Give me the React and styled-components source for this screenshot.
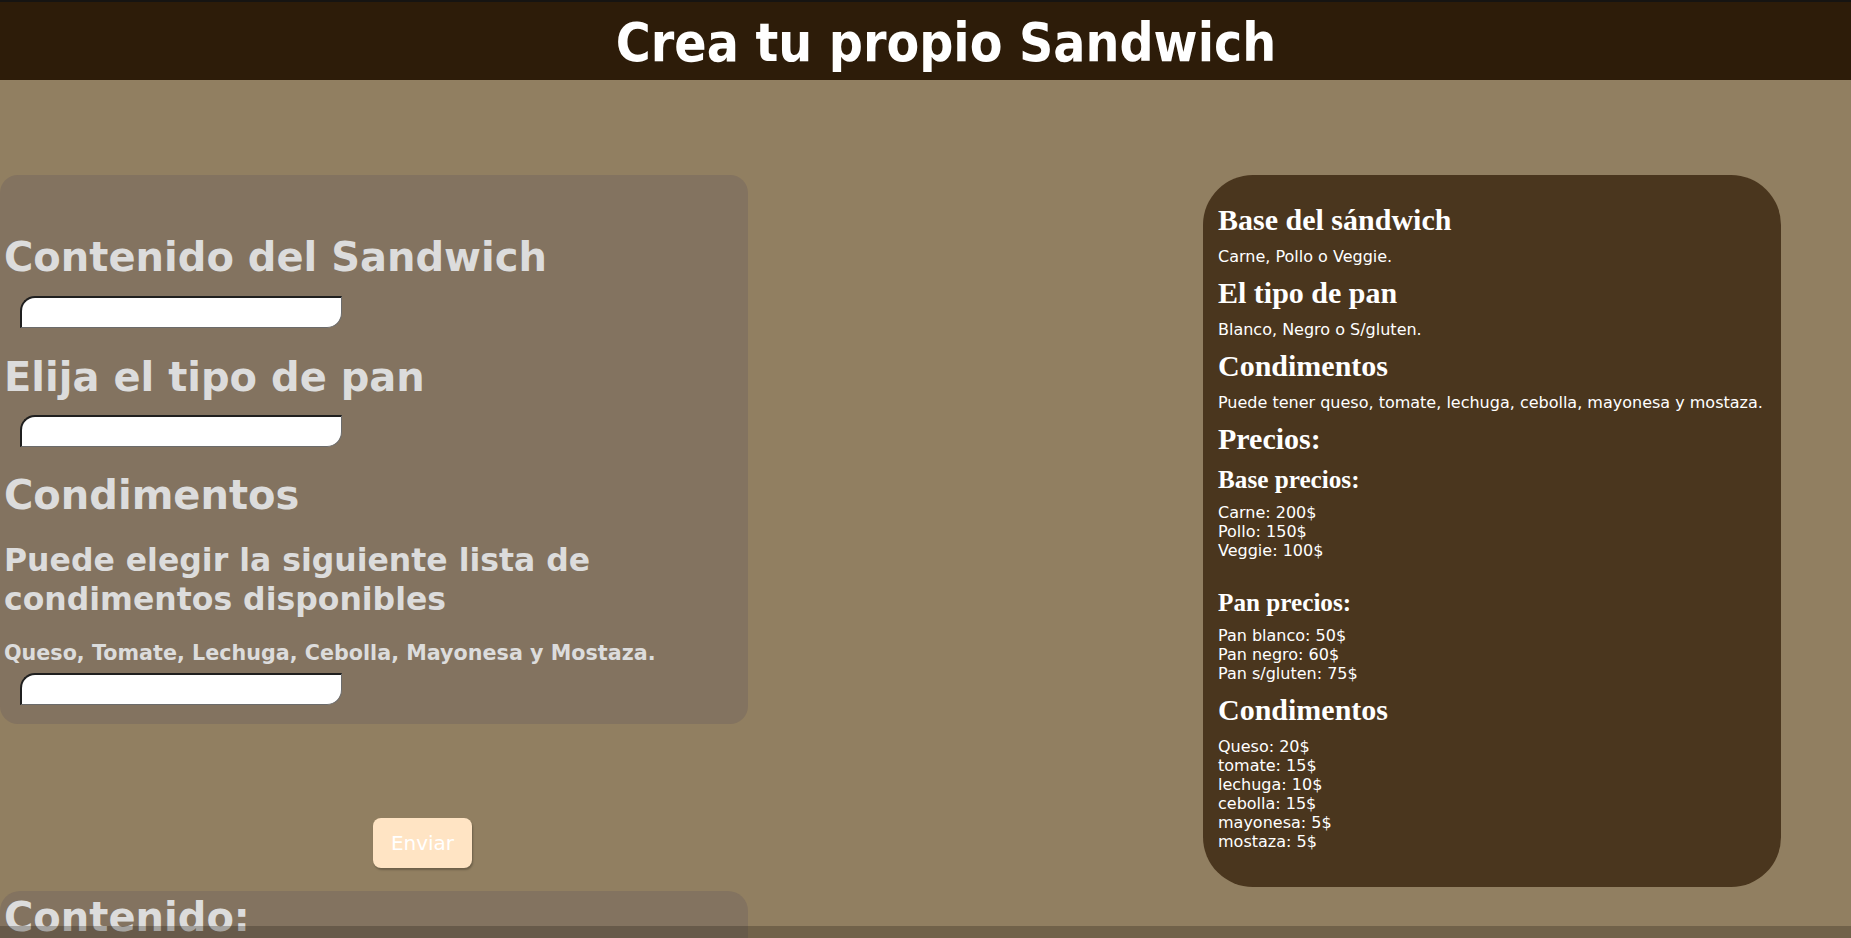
import React from 'react';
import styled, { createGlobalStyle } from 'styled-components';

const GlobalStyle = createGlobalStyle`
  body {
    margin: 0;
    background-color: #917f61;
    font-family: 'DejaVu Sans', Verdana, sans-serif;
  }
`;

const Header = styled.header`
  background-color: #2d1c09;
  border-top: 2px solid #161412;
  padding: 10px 0 6px 41px;
  text-align: center;
`;

const Title = styled.h1`
  margin: 0;
  font-family: 'DejaVu Sans Condensed', 'DejaVu Sans', sans-serif;
  font-stretch: condensed;
  font-size: 53px;
  line-height: 62px;
  font-weight: bold;
  color: #fff;
`;

const Main = styled.main`
  display: flex;
  justify-content: space-between;
  align-items: flex-start;
  padding: 95px 70px 0 0;
`;

const LeftColumn = styled.div`
  width: 748px;
  display: flex;
  flex-direction: column;
  align-items: flex-start;
`;

const FormCard = styled.section`
  align-self: stretch;
  background-color: #837360;
  border-radius: 18px;
  padding: 0 4px 19px;
  color: #dcdcdc;
  font-weight: bold;
`;

const SectionTitle = styled.h2`
  margin: ${(p) => p.$top || 0}px 0 0;
  font-size: 40px;
  line-height: 46px;
  font-weight: bold;
`;

const SubTitle = styled.h3`
  margin: ${(p) => p.$top || 0}px 0 0;
  font-size: 31.5px;
  line-height: 39px;
  font-weight: bold;
`;

const ListTitle = styled.h4`
  margin: ${(p) => p.$top || 0}px 0 0;
  font-size: 20.7px;
  line-height: 23px;
  font-weight: bold;
`;

const Field = styled.input`
  display: block;
  box-sizing: border-box;
  margin: ${(p) => p.$top}px 0 0 16px;
  width: 322px;
  height: 32px;
  background-color: #fff;
  border-style: solid;
  border-width: 2px 1px 1px 2px;
  border-color: #1f1f1f #6b6b6b #6b6b6b #1f1f1f;
  border-radius: 15px 0 15px 0;
  outline: none;
`;

const SendButton = styled.button`
  margin: 94px 0 0 373px;
  width: 99px;
  height: 50px;
  background-color: #ffe4c4;
  color: #fff;
  border: none;
  border-radius: 8px;
  font-family: 'DejaVu Sans', Verdana, sans-serif;
  font-size: 20px;
  box-shadow: 1px 2px 2px rgba(0, 0, 0, 0.25);
  cursor: pointer;
`;

const ResultCard = styled.section`
  align-self: stretch;
  margin-top: 23px;
  min-height: 220px;
  background-color: #837360;
  border-radius: 20px;
  padding: 3px 4px 0;
  color: #dcdcdc;
`;

const InfoPanel = styled.aside`
  width: 578px;
  box-sizing: border-box;
  padding: 18px 15px 26px;
  background-color: #4a361e;
  border-radius: 50px;
  color: #fff;
`;

const InfoTitle = styled.h2`
  margin: 10px 0;
  font-family: 'Liberation Serif', 'Times New Roman', serif;
  font-size: ${(p) => (p.$small ? '25.2px' : '30px')};
  line-height: ${(p) => (p.$small ? '27px' : '34px')};
  font-weight: bold;
`;

const InfoText = styled.p`
  margin: 10px 0;
  font-size: 16px;
  line-height: 19px;
`;

const Footer = styled.footer`
  position: fixed;
  left: 0;
  right: 0;
  bottom: 0;
  height: 12px;
  background-color: rgba(40, 32, 24, 0.3);
`;

const basePrices = ['Carne: 200$', 'Pollo: 150$', 'Veggie: 100$'];
const breadPrices = ['Pan blanco: 50$', 'Pan negro: 60$', 'Pan s/gluten: 75$'];
const extraPrices = ['Queso: 20$', 'tomate: 15$', 'lechuga: 10$', 'cebolla: 15$', 'mayonesa: 5$', 'mostaza: 5$'];

const Lines = ({ items, trailing }) => (
  <InfoText>
    {items.map((line, i) => (
      <React.Fragment key={line}>
        {line}
        {(i < items.length - 1 || trailing) && <br />}
      </React.Fragment>
    ))}
    {trailing && <br />}
  </InfoText>
);

const App = () => {
  return (
    <>
      <GlobalStyle />
      <Header>
        <Title>Crea tu propio Sandwich</Title>
      </Header>
      <Main>
        <LeftColumn>
          <FormCard>
            <SectionTitle $top={59}>Contenido del Sandwich</SectionTitle>
            <Field $top={16} type="text" />
            <SectionTitle $top={26}>Elija el tipo de pan</SectionTitle>
            <Field $top={15} type="text" />
            <SectionTitle $top={25}>Condimentos</SectionTitle>
            <SubTitle $top={23}>Puede elegir la siguiente lista de condimentos disponibles</SubTitle>
            <ListTitle $top={23}>Queso, Tomate, Lechuga, Cebolla, Mayonesa y Mostaza.</ListTitle>
            <Field $top={8} type="text" />
          </FormCard>
          <SendButton type="button">Enviar</SendButton>
          <ResultCard>
            <SectionTitle>Contenido:</SectionTitle>
          </ResultCard>
        </LeftColumn>
        <InfoPanel>
          <InfoTitle>Base del sándwich</InfoTitle>
          <InfoText>Carne, Pollo o Veggie.</InfoText>
          <InfoTitle>El tipo de pan</InfoTitle>
          <InfoText>Blanco, Negro o S/gluten.</InfoText>
          <InfoTitle>Condimentos</InfoTitle>
          <InfoText>Puede tener queso, tomate, lechuga, cebolla, mayonesa y mostaza.</InfoText>
          <InfoTitle>Precios:</InfoTitle>
          <InfoTitle $small>Base precios:</InfoTitle>
          <Lines items={basePrices} trailing />
          <InfoTitle $small>Pan precios:</InfoTitle>
          <Lines items={breadPrices} />
          <InfoTitle>Condimentos</InfoTitle>
          <Lines items={extraPrices} />
        </InfoPanel>
      </Main>
      <Footer />
    </>
  );
};

export default App;
